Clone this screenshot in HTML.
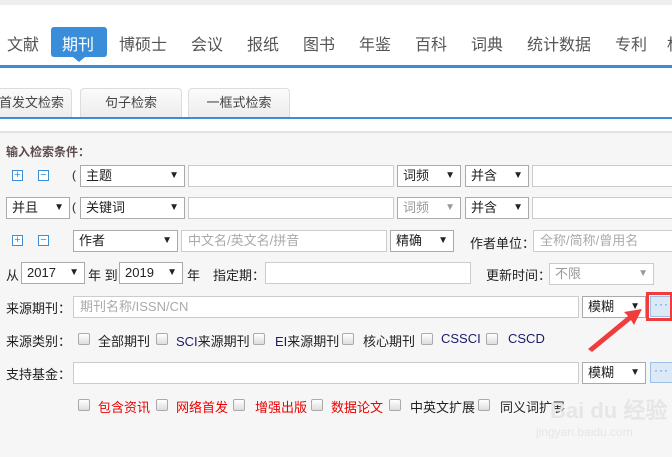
<!DOCTYPE html>
<html><head><meta charset="utf-8"><style>
*{margin:0;padding:0;box-sizing:border-box}
body{width:672px;height:457px;overflow:hidden;position:relative;background:#f6f6f6;font-family:"Liberation Sans","Noto Sans CJK SC",sans-serif;font-size:12px;color:#222}
.a{position:absolute;white-space:nowrap}
.nav{font-size:16px;color:#555;top:31px}
.sel,.inp{position:absolute;background:#fff;border:1px solid #aaa;height:22px}
.inp{border-color:#ccc}
.sel span{position:absolute;left:5px;top:2px;font-size:13px;line-height:16px}
.sel i{position:absolute;right:5px;top:4px;font-style:normal;font-size:10px;line-height:12px}
.ph{position:absolute;left:6px;top:2px;color:#aaa;font-size:13px;line-height:16px}
.cb{position:absolute;width:12px;height:12px;border:1px solid #aaa;border-radius:2px;background:linear-gradient(#fff,#ddd)}
.pm{position:absolute;width:11px;height:11px;border:1px solid #3a8dd8;color:#3a8dd8;font-size:11px;line-height:8px;text-align:center;background:#fff}
.tab{position:absolute;top:88px;height:30px;border:1px solid #ddd;border-bottom:none;border-radius:4px 4px 0 0;background:linear-gradient(#fbfbfb,#ececec);font-size:13px;color:#444;text-align:center;line-height:28px}
.dots{position:absolute;width:23px;height:21px;background:#dde9f7;border:1px solid #9dc0e6;color:#3a8dd8;font-size:12px;line-height:14px;text-align:center;letter-spacing:1px}
</style></head><body>
<div class="a" style="left:0;top:0;width:672px;height:5px;background:#eee"></div>
<div class="a" style="left:0;top:5px;width:672px;height:127px;background:#fff"></div>
<div class="a" style="left:0;top:65px;width:672px;height:3px;background:#3a8dd8"></div>
<div class="a" style="left:51px;top:27px;width:56px;height:30px;background:#3a8dd8;border-radius:3px"></div>
<div class="a" style="left:73px;top:57px;width:0;height:0;border-left:6px solid transparent;border-right:6px solid transparent;border-top:5px solid #3a8dd8"></div>
<div class="a nav" style="left:7px">文献</div>
<div class="a nav" style="left:62px;color:#fff">期刊</div>
<div class="a nav" style="left:119px">博硕士</div>
<div class="a nav" style="left:191px">会议</div>
<div class="a nav" style="left:247px">报纸</div>
<div class="a nav" style="left:303px">图书</div>
<div class="a nav" style="left:359px">年鉴</div>
<div class="a nav" style="left:415px">百科</div>
<div class="a nav" style="left:471px">词典</div>
<div class="a nav" style="left:527px">统计数据</div>
<div class="a nav" style="left:615px">专利</div>
<div class="a nav" style="left:667px">标</div>
<div class="tab" style="left:-30px;width:102px;text-align:right;padding-right:7px">首发文检索</div>
<div class="tab" style="left:80px;width:102px">句子检索</div>
<div class="tab" style="left:188px;width:102px">一框式检索</div>
<div class="a" style="left:0;top:117px;width:672px;height:2px;background:#3a8dd8"></div>
<div class="a" style="left:0;top:131px;width:672px;height:2px;background:#e2e2e2"></div>

<div class="a" style="left:6px;top:143px;font-weight:bold;color:#5a4a4a">输入检索条件：</div>
<div class="pm" style="left:12px;top:170px">+</div><div class="pm" style="left:38px;top:170px">−</div>
<div class="a" style="left:72px;top:168px">(</div>
<div class="sel" style="left:80px;top:165px;width:105px"><span>主题</span><i>▼</i></div>
<div class="inp" style="left:188px;top:165px;width:206px"></div>
<div class="sel" style="left:397px;top:165px;width:64px"><span>词频</span><i>▼</i></div>
<div class="sel" style="left:465px;top:165px;width:64px"><span>并含</span><i>▼</i></div>
<div class="inp" style="left:532px;top:165px;width:150px"></div>
<div class="sel" style="left:6px;top:197px;width:64px"><span>并且</span><i>▼</i></div>
<div class="a" style="left:72px;top:200px">(</div>
<div class="sel" style="left:80px;top:197px;width:105px"><span>关键词</span><i>▼</i></div>
<div class="inp" style="left:188px;top:197px;width:206px"></div>
<div class="sel" style="left:397px;top:197px;width:64px;color:#999"><span>词频</span><i>▼</i></div>
<div class="sel" style="left:465px;top:197px;width:64px"><span>并含</span><i>▼</i></div>
<div class="inp" style="left:532px;top:197px;width:150px"></div>
<div class="pm" style="left:12px;top:235px">+</div><div class="pm" style="left:38px;top:235px">−</div>
<div class="sel" style="left:73px;top:230px;width:105px"><span>作者</span><i>▼</i></div>
<div class="inp" style="left:181px;top:230px;width:206px"><span class="ph">中文名/英文名/拼音</span></div>
<div class="sel" style="left:390px;top:230px;width:64px"><span>精确</span><i>▼</i></div>
<div class="a" style="left:470px;top:233px;font-size:13px">作者单位：</div>
<div class="inp" style="left:533px;top:230px;width:150px"><span class="ph">全称/简称/曾用名</span></div>
<div class="a" style="left:6px;top:265px;font-size:13px">从</div>
<div class="sel" style="left:21px;top:262px;width:64px"><span>2017</span><i>▼</i></div>
<div class="a" style="left:88px;top:265px;font-size:13px">年 到</div>
<div class="sel" style="left:119px;top:262px;width:64px"><span>2019</span><i>▼</i></div>
<div class="a" style="left:187px;top:265px;font-size:13px">年</div>
<div class="a" style="left:213px;top:265px;font-size:13px">指定期：</div>
<div class="inp" style="left:265px;top:262px;width:206px"></div>
<div class="a" style="left:486px;top:265px;font-size:13px">更新时间：</div>
<div class="sel" style="left:549px;top:263px;width:105px;border-color:#ccc;color:#999"><span>不限</span><i style="color:#999">▼</i></div>
<div class="a" style="left:6px;top:298px;font-size:13px">来源期刊：</div>
<div class="inp" style="left:73px;top:296px;width:506px"><span class="ph">期刊名称/ISSN/CN</span></div>
<div class="sel" style="left:582px;top:296px;width:64px"><span>模糊</span><i>▼</i></div>
<div class="dots" style="left:650px;top:296px">···</div>
<div class="a" style="left:646px;top:292px;width:27px;height:29px;border:3px solid #f03c3c"></div>
<div class="a" style="left:6px;top:331px;font-size:13px">来源类别：</div>
<div class="cb" style="left:78px;top:333px"></div><div class="a" style="left:98px;top:331px;font-size:13px">全部期刊</div>
<div class="cb" style="left:156px;top:333px"></div><div class="a" style="left:176px;top:331px;font-size:13px;color:#1a1a6a">SCI<span style="color:#222">来源期刊</span></div>
<div class="cb" style="left:253px;top:333px"></div><div class="a" style="left:275px;top:331px;font-size:13px;color:#1a1a6a">EI<span style="color:#222">来源期刊</span></div>
<div class="cb" style="left:342px;top:333px"></div><div class="a" style="left:363px;top:331px;font-size:13px">核心期刊</div>
<div class="cb" style="left:421px;top:333px"></div><div class="a" style="left:441px;top:331px;font-size:13px;color:#1a1a6a">CSSCI</div>
<div class="cb" style="left:486px;top:333px"></div><div class="a" style="left:508px;top:331px;font-size:13px;color:#1a1a6a">CSCD</div>
<div class="a" style="left:6px;top:364px;font-size:13px">支持基金：</div>
<div class="inp" style="left:73px;top:362px;width:506px"></div>
<div class="sel" style="left:582px;top:362px;width:64px"><span>模糊</span><i>▼</i></div>
<div class="dots" style="left:650px;top:362px">···</div>
<div class="cb" style="left:78px;top:399px"></div><div class="a" style="left:98px;top:397px;font-size:13px;color:#e00">包含资讯</div>
<div class="cb" style="left:156px;top:399px"></div><div class="a" style="left:176px;top:397px;font-size:13px;color:#e00">网络首发</div>
<div class="cb" style="left:233px;top:399px"></div><div class="a" style="left:255px;top:397px;font-size:13px;color:#e00">增强出版</div>
<div class="cb" style="left:311px;top:399px"></div><div class="a" style="left:331px;top:397px;font-size:13px;color:#e00">数据论文</div>
<div class="cb" style="left:389px;top:399px"></div><div class="a" style="left:410px;top:397px;font-size:13px">中英文扩展</div>
<div class="cb" style="left:478px;top:399px"></div><div class="a" style="left:500px;top:397px;font-size:13px">同义词扩展</div>
<svg class="a" style="left:0;top:0" width="672" height="457">
<polygon points="588,349 628,316 624,312 642,309 634,325 631,320 592,352" fill="#f03c3c"/>
<text x="550" y="418" font-size="22" fill="#e6e6e6" font-family="Liberation Sans,sans-serif" font-weight="bold">Bai du 经验</text>
<text x="536" y="436" font-size="12" fill="#e6e6e6" font-family="Liberation Sans,sans-serif">jingyan.baidu.com</text>
</svg>
</body></html>
